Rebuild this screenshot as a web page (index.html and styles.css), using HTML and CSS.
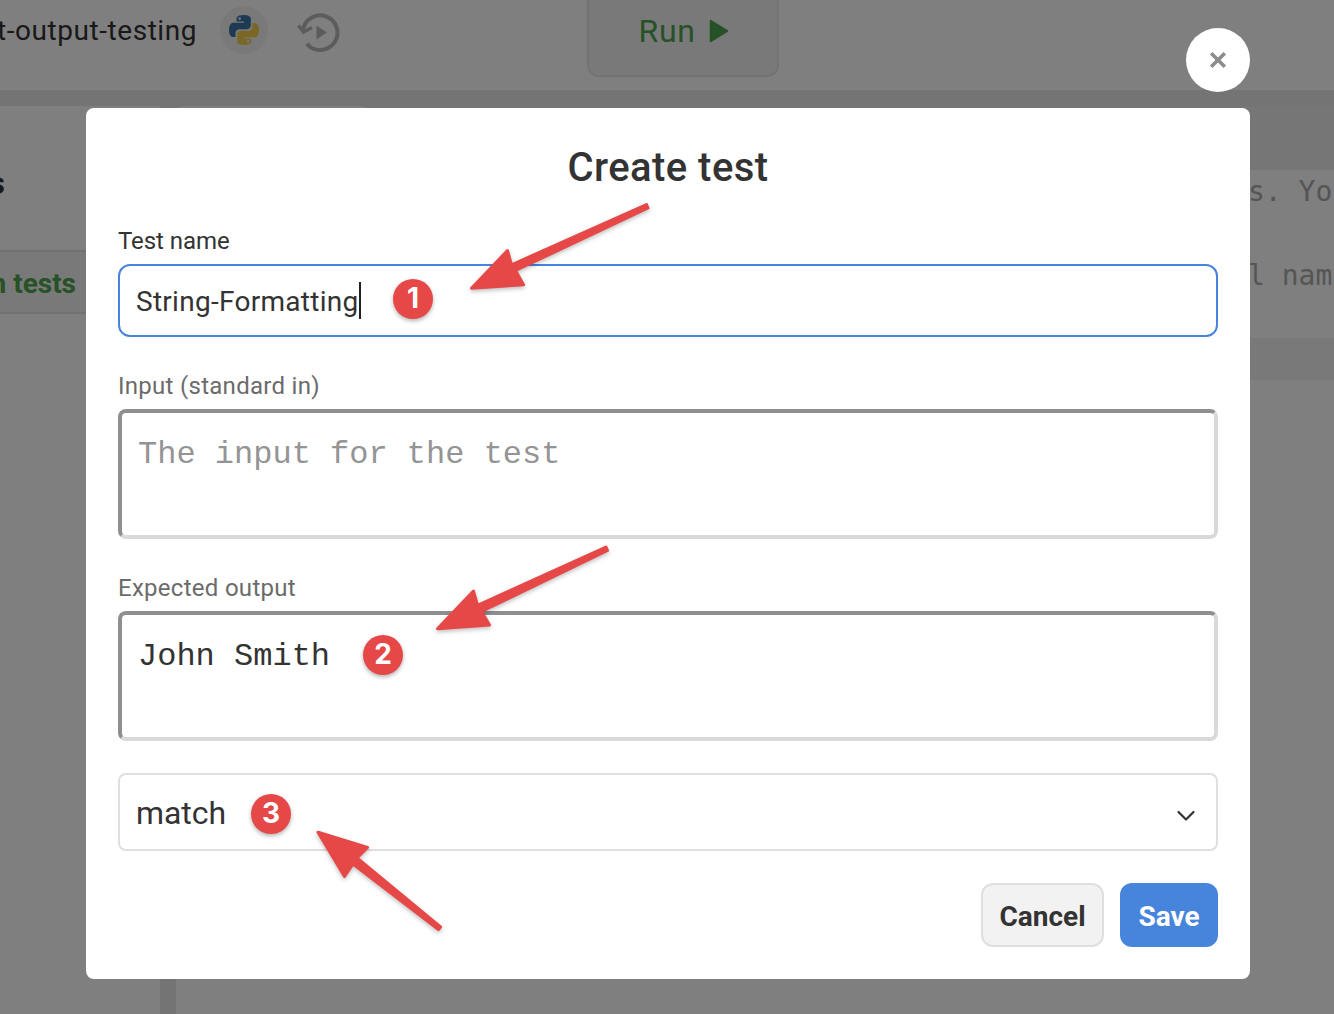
FILE: index.html
```html
<!DOCTYPE html>
<html lang="en">
<head>
<meta charset="utf-8">
<title>Create test</title>
<link rel="stylesheet" href="styles.css">
</head>
<body>
<div class="app">
  <header class="topbar">
    <div class="project"><span class="project-name">t-output-testing</span></div>
    <div class="language">
      <svg width="30" height="30" viewBox="0 0 110 110">
        <path fill="#3d72a4" d="M54 0C27 0 28 12 28 12v12h27v4H17S0 26 0 54s15 27 15 27h9V67s0-15 15-15h27s14 0 14-14V14S82 0 54 0zM39 8a5 5 0 1 1 0 10a5 5 0 0 1 0-10z"/>
        <path fill="#f4cf4c" d="M56 110c27 0 26-12 26-12V86H55v-4h38s17 2 17-26s-15-27-15-27h-9v14s0 15-15 15H44s-14 0-14 14v24s-2 14 26 14zM71 102a5 5 0 1 1 0-10a5 5 0 0 1 0 10z"/>
      </svg>
    </div>
    <svg class="history" width="44" height="40" viewBox="0 0 44 40" fill="none">
      <path d="M6 17.5A17.3 17.3 0 1 1 9.8 30.7" stroke="#b8b8b8" stroke-width="4"/>
      <path d="M1.500 12.500L6.500 19L15 14.500" stroke="#b8b8b8" stroke-width="3.600"/>
      <path d="M19.500 12.500L30 19.500L19.500 26.500z" fill="#b8b8b8"/>
    </svg>
    <div class="run"><span class="run-label">Run</span>
      <svg width="20" height="24" viewBox="0 0 20 24"><path d="M1.500 1.500L18.500 12L1.500 22.500z" fill="#4ea24e" stroke="#4ea24e" stroke-width="1.500" stroke-linejoin="round"/></svg>
    </div>
  </header>
  <div class="workspace">
    <aside class="side">
      <div class="side-title"><span>s</span></div>
      <div class="side-button"><span>n tests</span></div>
    </aside>
    <main class="main">
      <div class="tabs"><div class="tab"></div></div>
      <div class="code">
        <div class="line">s. Yo</div>
        <div class="line"></div>
        <div class="line">l nam</div>
        <div class="line"></div>
        <div class="line active"></div>
      </div>
    </main>
  </div>
</div>

<div class="overlay">
  <button class="close" aria-label="Close"><svg width="18" height="18" viewBox="0 0 18 18"><path d="M2.200 2.200L15.800 15.800M15.800 2.200L2.200 15.800" stroke="#8c8c8c" stroke-width="3.600"/></svg></button>
  <div class="modal">
    <h1 class="title"><span>Create test</span></h1>
    <div class="label focused"><span>Test name</span></div>
    <div class="input"><span class="value">String-Formatting</span><i class="caret"></i></div>
    <div class="label"><span>Input (standard in)</span></div>
    <textarea class="area" placeholder="The input for the test"></textarea>
    <div class="label"><span>Expected output</span></div>
    <textarea class="area">John Smith</textarea>
    <div class="select"><span class="option">match</span>
      <svg width="20" height="12" viewBox="0 0 20 12"><path d="M2.500 2L10 9.500L17.500 2" fill="none" stroke="#333" stroke-width="2.200" stroke-linecap="round" stroke-linejoin="round"/></svg>
    </div>
    <div class="actions">
      <button class="btn cancel"><span>Cancel</span></button>
      <button class="btn save"><span>Save</span></button>
    </div>
  </div>
</div>

<svg class="arrows" width="1334" height="1014" viewBox="0 0 1334 1014">
  <g fill="#e64848" stroke="#e64848" stroke-width="3" stroke-linejoin="round">
    <path d="M471.500 288.200L507.500 250.500L511.500 264.800L646.500 204.500L648 208L515.500 270.500L523.500 284.800z"/>
    <path d="M437.500 628.700L473.500 591L477.500 605.300L606 547L607.500 550.500L481.500 611.500L489.500 625z"/>
    <path d="M318 832.200L367.500 847.500L357 858L440.500 927L438.500 929.500L353 864L344.500 876.500z"/>
  </g>
</svg>
<div class="badge b1">1</div>
<div class="badge b2">2</div>
<div class="badge b3">3</div>
</body>
</html>
```
FILE: styles.css
```css
* { box-sizing: border-box; }
html, body { margin: 0; width: 1334px; height: 1014px; overflow: hidden; }
body { position: relative; background: #fff; color: #333; font-family: Roboto, "Liberation Sans", sans-serif; }
button { font-family: inherit; margin: 0; padding: 0; }
span { white-space: nowrap; }

.app { width: 1334px; height: 1014px; display: flex; flex-direction: column; background: #e9e9e9; }
.topbar { height: 90px; flex: none; display: flex; align-items: flex-start; background: #fff; }
.project { width: 197px; flex: none; height: 62px; display: flex; justify-content: flex-end; }
.project-name { font-size: 28px; line-height: 62px; letter-spacing: .55px; }
.language { width: 48px; height: 48px; margin: 6px 0 0 23px; border-radius: 50%; background: #f2f2f2; display: flex; align-items: center; justify-content: center; }
.history { margin: 13px 0 0 29px; }
.run { width: 192px; height: 77px; margin-left: 246px; padding-bottom: 14px; border: 2px solid #e6e6e6; border-top: 0; border-radius: 0 0 12px 12px; background: #f2f2f2; display: flex; align-items: center; justify-content: center; gap: 14px; padding-left: 2px; color: #4ea24e; font-size: 32px; }
.run-label { letter-spacing: .6px; }
.workspace { flex: 1; display: flex; gap: 16px; padding-top: 16px; }
.side { width: 160px; flex: none; background: #fff; }
.side-title { width: 5px; height: 144px; padding-top: 52px; display: flex; justify-content: flex-end; font-size: 32px; font-weight: 700; line-height: 50px; }
.side-button { width: 100px; height: 64px; border: solid #e2e2e2; border-width: 2px 0; background: #f2f2f2; display: flex; justify-content: flex-end; align-items: center; padding: 2px 24px 0 0; color: #4ea24e; font-size: 28px; font-weight: 700; }
.main { flex: 1; min-width: 0; background: #fff; }
.tabs { height: 64px; background: #ececec; }
.tab { width: 192px; height: 64px; background: #fff; border-radius: 8px 8px 0 0; }
.line { height: 42px; padding-left: 1072px; font: 28px/44px "DejaVu Sans Mono", monospace; white-space: pre; color: #aaa; }
.active { background: #f2f2f2; }

.overlay { position: absolute; inset: 0; background: rgba(0, 0, 0, .5); padding: 28px 84px 0 86px; display: flex; flex-direction: column; }
.close { align-self: flex-end; width: 64px; height: 64px; border: 0; border-radius: 50%; background: #fff; display: flex; align-items: center; justify-content: center; }
.modal { height: 871px; margin-top: 16px; padding: 32px; border-radius: 8px; background: #fff; display: flex; flex-direction: column; }
.title { margin: 0 0 28px; height: 56px; line-height: 56px; font-size: 40px; font-weight: 500; text-align: center; }
.title span { letter-spacing: .45px; }
.label { height: 32px; margin: 32px 0 8px; font-size: 24px; line-height: 34px; letter-spacing: .28px; color: #6b6b6b; }
.label.focused { margin-top: 0; letter-spacing: -.05px; color: #333; }
.input { height: 73px; border: 2px solid #4785dd; border-radius: 12px; padding-left: 16px; display: flex; align-items: center; font-size: 28px; }
.value { padding-top: 2px; letter-spacing: .28px; }
.caret { width: 2px; height: 37px; background: #222; }
.area { display: block; width: 100%; height: 130px; border: 4px solid; border-color: #8f8f8f #d9d9d9 #d9d9d9 #8f8f8f; border-radius: 8px; padding: 22px 16px 16px; resize: none; outline: 0; font: 32px/40px "Liberation Mono", monospace; color: #333; background: #fff; overflow: hidden; }
.area::placeholder { color: #949494; opacity: 1; }
.select { height: 78px; margin-top: 32px; border: 2px solid #dfdfdf; border-radius: 8px; padding: 0 20px 0 16px; display: flex; align-items: center; justify-content: space-between; font-size: 32px; }
.select svg { margin-top: 8px; }
.option { padding-top: 2px; letter-spacing: -.05px; }
.actions { margin-top: 32px; display: flex; justify-content: flex-end; gap: 16px; }
.btn { height: 64px; border-radius: 12px; padding-top: 2px; font-size: 28px; font-weight: 700; }
.cancel { width: 123px; border: 2px solid #dfdfdf; background: #f2f2f2; color: #333; }
.save { width: 98px; border: 0; background: #4785dd; color: #fff; }

.arrows { position: absolute; left: 0; top: 0; filter: drop-shadow(0 2px 2px rgba(0, 0, 0, .25)); }
.badge { position: absolute; width: 40px; height: 40px; border-radius: 50%; background: #e64848; color: #fff; font: 700 28px/38px Inter, sans-serif; text-align: center; box-shadow: 0 2px 4px rgba(0, 0, 0, .3); }
.b1 { left: 393px; top: 279px; }
.b2 { left: 363px; top: 635px; }
.b3 { left: 251px; top: 794px; }
```
